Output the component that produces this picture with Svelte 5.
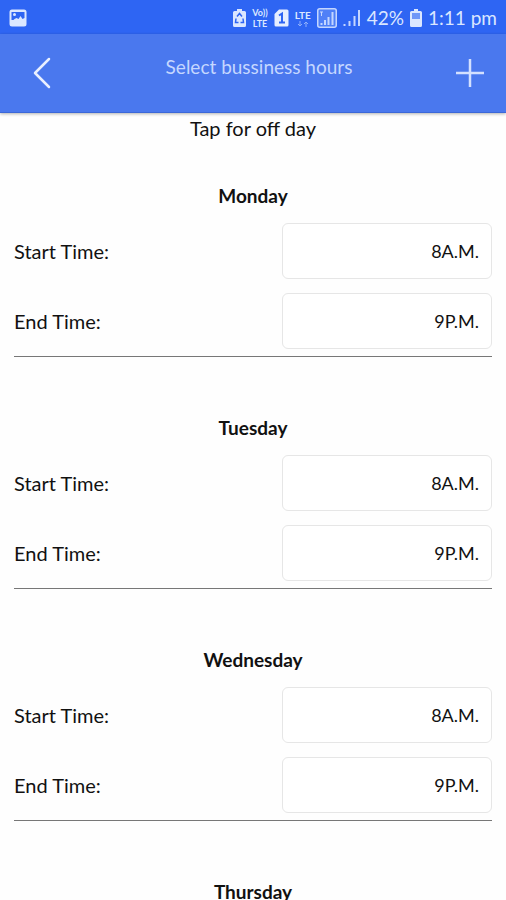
<script>
	let days = $state([
		{ name: 'Monday', start: '8A.M.', end: '9P.M.' },
		{ name: 'Tuesday', start: '8A.M.', end: '9P.M.' },
		{ name: 'Wednesday', start: '8A.M.', end: '9P.M.' },
		{ name: 'Thursday' }
	]);
</script>

<div class="screen">
	<div class="status-bar">
		<svg class="picture" width="18" height="18" viewBox="0 0 18 18" aria-hidden="true">
			<rect x="0.5" y="0.5" width="17" height="17" rx="2.5" fill="#dbe7ff" />
			<path d="M2.500 3h13v6l-2 1-2-3-2 3-2-1-2 1-1 1H2.500z" fill="#2e65f3" />
			<circle cx="5.500" cy="5.500" r="1.500" fill="#dbe7ff" />
		</svg>

		<div class="indicators">
			<svg width="13" height="18" viewBox="0 0 13 18" aria-hidden="true">
				<path d="M4 0h5v2h2.500q1.500 0 1.500 1.500v13q0 1.500-1.500 1.500h-10q-1.500 0-1.500-1.500v-13q0-1.500 1.500-1.500H4z" fill="#dbe7ff" />
				<path d="M4 7.500l2.500-3 2.500 3M3 9.500l-.5 4h3M10 9.500l.5 4h-3" fill="none" stroke="#2e65f3" stroke-width="1.500" />
			</svg>
			<span class="volte"><span>Vo))</span><span>LTE</span></span>
			<svg width="15" height="18" viewBox="0 0 15 18" aria-hidden="true">
				<path d="M5 0.500h8q1.500 0 1.500 1.500v14q0 1.500-1.500 1.500h-11q-1.500 0-1.500-1.500V5z" fill="#e6eeff" />
				<path d="M5 6.500l3-2v9M5 13.500h6" fill="none" stroke="#2e65f3" stroke-width="2" />
			</svg>
			<span class="lte">
				<span>LTE</span>
				<svg width="12" height="6" viewBox="0 0 12 6" aria-hidden="true">
					<path d="M3 0v5M1 3l2 2 2-2M9 6V1M7 3l2-2 2 2" fill="none" stroke="#8fb0fb" />
				</svg>
			</span>
			<svg width="20" height="20" viewBox="0 0 20 20" aria-hidden="true">
				<rect x="0.750" y="0.750" width="18.500" height="18.500" rx="2" fill="#4f80f7" stroke="#c4d6ff" stroke-width="1.500" />
				<path d="M4.500 17v-2M8 17v-5M11.500 17V9M15.500 17V4" stroke="#c4d6ff" stroke-width="2" />
				<path d="M3 4h3M4.500 4v4" stroke="#c4d6ff" />
			</svg>
			<svg width="18" height="18" viewBox="0 0 18 18" aria-hidden="true">
				<path d="M1.500 17v-2M6.500 17v-5M11.500 17V7M16 17V1" stroke="#c4d6ff" stroke-width="2" />
			</svg>
			<span class="percent">42%</span>
			<svg width="12" height="18" viewBox="0 0 12 18" aria-hidden="true">
				<path d="M4 0h4v2h2.500q1.500 0 1.500 1.500v13q0 1.500-1.500 1.500h-9q-1.500 0-1.500-1.500v-13q0-1.500 1.500-1.500H4z" fill="#dbe7ff" />
				<path d="M2 4h8v6H2z" fill="#6f97f8" />
			</svg>
			<span class="clock">1:11 pm</span>
		</div>
	</div>

	<header>
		<button type="button" class="back" aria-label="Back">
			<svg width="20" height="32" viewBox="0 0 20 32" aria-hidden="true">
				<path d="M17 2L3 16l14 14" fill="none" stroke="#e9f0ff" stroke-width="2.500" stroke-linecap="round" stroke-linejoin="round" />
			</svg>
		</button>
		<h1>Select bussiness hours</h1>
		<button type="button" class="add" aria-label="Add">
			<svg width="30" height="30" viewBox="0 0 30 30" aria-hidden="true">
				<path d="M1 15h28M15 1v28" stroke="#d3e0ff" stroke-width="2.500" />
			</svg>
		</button>
	</header>

	<main>
		<p class="hint">Tap for off day</p>

		{#each days as day (day.name)}
			<section>
				<h2>{day.name}</h2>
				{#if day.start}
					<div class="hours">
						<label for="{day.name}-start">Start Time:</label>
						<input id="{day.name}-start" type="text" bind:value={day.start} />
						<label for="{day.name}-end">End Time:</label>
						<input id="{day.name}-end" type="text" bind:value={day.end} />
					</div>
				{/if}
			</section>
		{/each}
	</main>
</div>

<style>
	:global(body) {
		margin: 0;
		background: #fefefe;
	}

	.screen {
		display: flex;
		flex-direction: column;
		height: 100vh;
		overflow: hidden;
		color: #111;
		font-family: Lato, 'Open Sans', sans-serif;
		font-size: 20px;
		line-height: 24px;
	}

	.status-bar {
		display: flex;
		flex: none;
		align-items: center;
		justify-content: space-between;
		height: 34px;
		padding: 2px 9px 0;
		box-sizing: border-box;
		background: #2e65f3;
		color: #dbe7ff;
		font-size: 19px;
	}

	.indicators {
		display: flex;
		align-items: center;
		gap: 6px;
	}

	.volte,
	.lte {
		display: flex;
		flex-direction: column;
		align-items: center;
		font-size: 9px;
		font-weight: 700;
		line-height: 11px;
	}

	.lte {
		font-size: 10px;
	}

	header {
		display: flex;
		flex: none;
		align-items: stretch;
		height: 79px;
		box-sizing: border-box;
		border-bottom: 1px solid #3c68d8;
		background: #4a78ee;
		box-shadow: 0 1px 3px rgba(0, 0, 0, 0.3);
		z-index: 1;
	}

	header button {
		display: flex;
		align-items: center;
		justify-content: center;
		padding: 0;
		border: 0;
		background: transparent;
		cursor: pointer;
	}

	.back {
		width: 84px;
	}

	.add {
		width: 72px;
	}

	h1 {
		flex: 1;
		margin: 0;
		padding-top: 21px;
		color: #c5d7ff;
		font-size: 19px;
		font-weight: 400;
		text-align: center;
	}

	main {
		flex: 1;
		min-height: 0;
		overflow-y: auto;
		padding: 3px 14px 0;
		scrollbar-width: none;
	}

	.hint {
		margin: 0 0 44px;
		text-align: center;
	}

	section {
		margin-bottom: 59px;
	}

	h2 {
		margin: 0;
		font-size: 19px;
		font-weight: 700;
		text-align: center;
	}

	.hours {
		display: grid;
		grid-template-columns: 56fr 44fr;
		align-items: center;
		row-gap: 14px;
		margin-top: 15px;
		padding-bottom: 7px;
		border-bottom: 1px solid #777;
	}

	input {
		width: 100%;
		height: 56px;
		padding: 0 12px;
		box-sizing: border-box;
		border: 1px solid #e6e6e6;
		border-radius: 6px;
		background: #fff;
		color: #111;
		font: inherit;
		font-size: 18px;
		text-align: right;
	}
</style>
